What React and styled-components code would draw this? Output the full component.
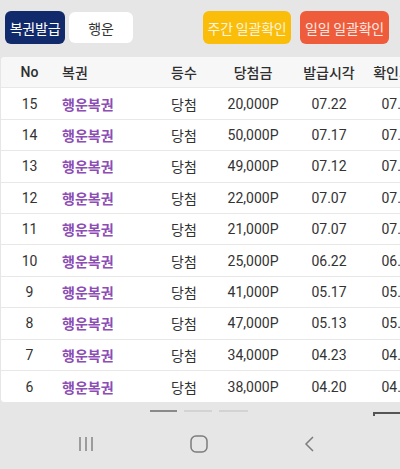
import React from 'react'
import styled, { createGlobalStyle } from 'styled-components'

const GlobalStyle = createGlobalStyle`
  html, body {
    margin: 0;
    padding: 0;
    background: #e6e6e6;
    font-family: Roboto, "Noto Sans CJK KR", sans-serif;
    overflow: hidden;
  }
`

const Page = styled.div`
  width: 400px;
  height: 469px;
  display: flex;
  flex-direction: column;
  background: #e6e6e6;
  overflow: hidden;
`

const Toolbar = styled.div`
  display: flex;
  justify-content: space-between;
  align-items: center;
  padding: 11px 11px 0 5px;
  height: 33px;
`

const ButtonGroup = styled.div`
  display: flex;
  align-items: center;
  gap: ${(props) => props.gap || 4}px;
`

const Button = styled.button`
  height: ${(props) => props.h || 33}px;
  width: ${(props) => props.w}px;
  padding: 0;
  border: none;
  border-radius: 6px;
  background: ${(props) => props.bg};
  color: ${(props) => props.fg || '#fff'};
  font-family: "Noto Sans CJK KR", sans-serif;
  font-size: 14px;
  letter-spacing: -0.2px;
`

const Card = styled.div`
  margin: 13px 0 0 1px;
  width: 440px;
  background: #fff;
  border-radius: 4px;
  overflow: hidden;
`

const Row = styled.div`
  display: grid;
  grid-template-columns: 57px 102px 48px 90px 62px 78px;
  align-items: center;
  height: 31.4px;
  box-sizing: border-box;
  border-bottom: ${(props) => (props.last ? 'none' : '1px solid #e8e8e8')};
  background: ${(props) => (props.head ? '#f7f7f7' : '#fff')};
  color: ${(props) => (props.head ? '#2e2e2e' : '#333')};
  font-weight: ${(props) => (props.head ? 500 : 400)};
  font-size: 14px;
`

const Cell = styled.div`
  text-align: ${(props) => props.align || 'center'};
  padding-left: ${(props) => props.pl || 0}px;
  font-family: ${(props) => (props.kr ? '"Noto Sans CJK KR", sans-serif' : 'Roboto, "Noto Sans CJK KR", sans-serif')};
  white-space: nowrap;
`

const Link = styled.span`
  color: #8c4db5;
  font-weight: 700;
  font-family: "Noto Sans CJK KR", sans-serif;
`

const Scrollbars = styled.div`
  position: relative;
  height: 20px;
  display: flex;
  gap: 7px;
  padding: 8px 0 0 150px;
  box-sizing: border-box;
`

const Dash = styled.div`
  width: ${(props) => props.w}px;
  height: 1.5px;
  background: ${(props) => (props.active ? '#8a8a8a' : '#d3d3d3')};
`

const HScroll = styled.div`
  position: absolute;
  right: 0;
  top: 10px;
  width: 27px;
  height: 4px;
  border-top: 2px solid #555;
  border-left: 2px solid #555;
  box-sizing: border-box;
`

const NavBar = styled.div`
  display: flex;
  align-items: center;
  gap: 96px;
  padding-left: 78px;
  height: 40px;
  margin-top: 2px;
`

const rows = [
  [15, '20,000P', '07.22', '07.22'],
  [14, '50,000P', '07.17', '07.17'],
  [13, '49,000P', '07.12', '07.12'],
  [12, '22,000P', '07.07', '07.07'],
  [11, '21,000P', '07.07', '07.07'],
  [10, '25,000P', '06.22', '06.22'],
  [9, '41,000P', '05.17', '05.17'],
  [8, '47,000P', '05.13', '05.13'],
  [7, '34,000P', '04.23', '04.23'],
  [6, '38,000P', '04.20', '04.20'],
]

const App = () => (
  <Page>
    <GlobalStyle />
    <Toolbar>
      <ButtonGroup>
        <Button w={60} bg="#112a6c">복권발급</Button>
        <Button w={64} h={31} bg="#fff" fg="#333">행운</Button>
      </ButtonGroup>
      <ButtonGroup gap={9}>
        <Button w={88} bg="#fabd0a" fg="#fdf4dc">주간 일괄확인</Button>
        <Button w={89} bg="#ee5c3b" fg="#fde9e3">일일 일괄확인</Button>
      </ButtonGroup>
    </Toolbar>

    <Card>
      <Row head>
        <Cell>No</Cell>
        <Cell align="left" pl={4} kr>복권</Cell>
        <Cell kr>등수</Cell>
        <Cell kr>당첨금</Cell>
        <Cell kr>발급시각</Cell>
        <Cell kr>확인시각</Cell>
      </Row>
      {rows.map(([no, prize, issued, checked], i) => (
        <Row key={no} last={i === rows.length - 1}>
          <Cell>{no}</Cell>
          <Cell align="left" pl={4}><Link>행운복권</Link></Cell>
          <Cell kr>당첨</Cell>
          <Cell>{prize}</Cell>
          <Cell>{issued}</Cell>
          <Cell>{checked}</Cell>
        </Row>
      ))}
    </Card>

    <Scrollbars>
      <Dash w={27} active />
      <Dash w={28} />
      <Dash w={29} />
      <HScroll />
    </Scrollbars>

    <NavBar>
      <svg width="16" height="14" viewBox="0 0 16 14">
        <g stroke="#7c7c7c" strokeWidth="1.4">
          <line x1="2" y1="0" x2="2" y2="14" />
          <line x1="8" y1="0" x2="8" y2="14" />
          <line x1="14" y1="0" x2="14" y2="14" />
        </g>
      </svg>
      <svg width="18" height="18" viewBox="0 0 18 18">
        <rect x="1" y="1" width="16" height="16" rx="5" fill="none" stroke="#7c7c7c" strokeWidth="1.5" />
      </svg>
      <svg width="10" height="16" viewBox="0 0 10 16">
        <polyline points="9,1 2,8 9,15" fill="none" stroke="#7c7c7c" strokeWidth="1.5" />
      </svg>
    </NavBar>
  </Page>
)

export default App
